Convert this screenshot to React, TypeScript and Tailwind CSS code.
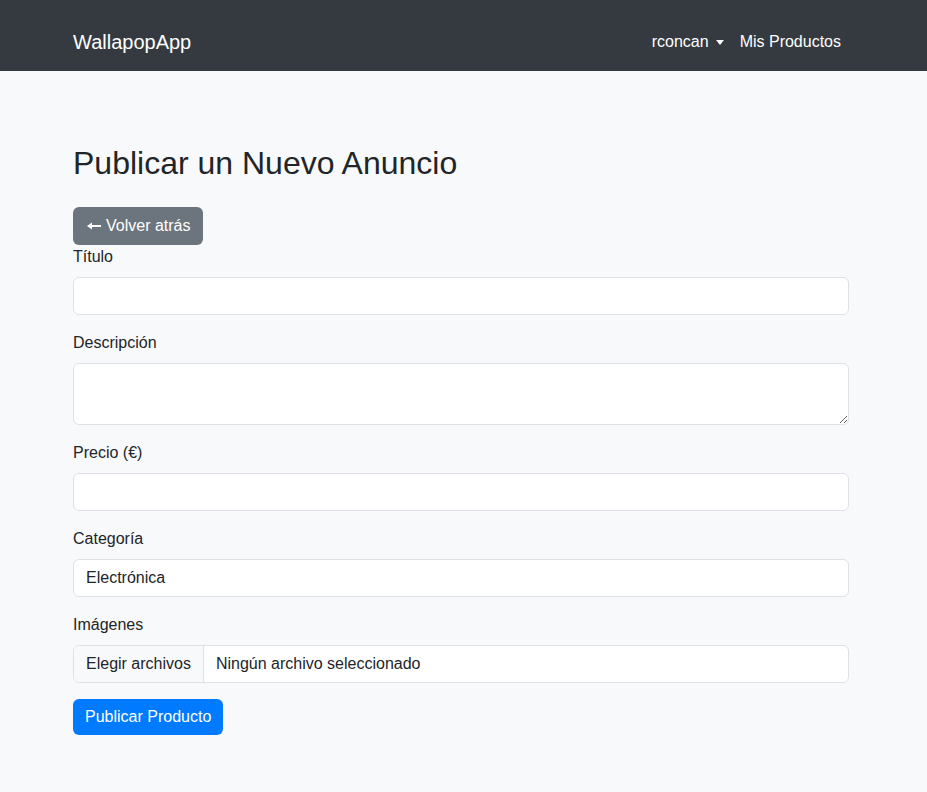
import { useState } from 'react'

const inputCls =
  'block w-full h-[38px] px-3 rounded-md border border-[#dee2e6] bg-white text-base text-[#212529] outline-none'

function Field({ label, children }: { label: string; children: React.ReactNode }) {
  return (
    <div className="mb-4">
      <label className="block mb-2 leading-6">{label}</label>
      {children}
    </div>
  )
}

export default function App() {
  const [categoria, setCategoria] = useState('Electrónica')

  return (
    <div className="min-h-[792px] bg-[#f8f9fa] text-[#212529] text-base font-['Liberation_Sans',Arial,sans-serif]">
      {/* Navbar */}
      <nav className="bg-[#343a40] h-[71px] pt-[13px]">
        <div className="ml-[73px] w-[776px] h-[58px] flex items-center justify-between">
          <a className="text-white text-xl leading-[30px]">WallapopApp</a>
          <div className="flex items-center">
            <a className="px-2 text-white flex items-center">
              rconcan
              <span className="ml-[7px] inline-block w-0 h-0 border-x-[4px] border-x-transparent border-t-[5px] border-t-white" />
            </a>
            <a className="px-2 text-white">Mis Productos</a>
          </div>
        </div>
      </nav>

      {/* Contenido */}
      <main className="ml-[73px] w-[776px] pt-[73px] pb-12">
        <h2 className="text-[32px] leading-[38px] mb-[25px]">Publicar un Nuevo Anuncio</h2>

        <button className="h-[38px] pl-[14px] pr-[13px] rounded-md bg-[#6c757d] text-white flex items-center gap-[5px]">
          <svg width="14" height="10" viewBox="0 0 14 10" className="shrink-0">
            <path d="M1 5h13" stroke="white" strokeWidth="2" />
            <path d="M0 5l5-3.5v7z" fill="white" />
          </svg>
          <span>Volver atrás</span>
        </button>

        <form onSubmit={(e) => e.preventDefault()}>
          <Field label="Título">
            <input type="text" className={inputCls} />
          </Field>

          <Field label="Descripción">
            <textarea rows={2} className="block w-full h-[62px] px-3 py-1.5 rounded-md border border-[#dee2e6] bg-white outline-none" />
          </Field>

          <Field label="Precio (€)">
            <input type="number" className={inputCls} />
          </Field>

          <Field label="Categoría">
            <select
              value={categoria}
              onChange={(e) => setCategoria(e.target.value)}
              className={`${inputCls} appearance-none`}
            >
              <option>Electrónica</option>
              <option>Hogar</option>
              <option>Moda</option>
            </select>
          </Field>

          <Field label="Imágenes">
            <div className="flex h-[38px] rounded-md border border-[#dee2e6] bg-white overflow-hidden">
              <div className="px-3 flex items-center bg-[#f8f9fa] border-r border-[#dee2e6]">Elegir archivos</div>
              <div className="px-3 flex items-center">Ningún archivo seleccionado</div>
            </div>
          </Field>

          <button type="submit" className="h-9 px-3 rounded-md bg-[#007bff] text-white">
            Publicar Producto
          </button>
        </form>
      </main>
    </div>
  )
}
